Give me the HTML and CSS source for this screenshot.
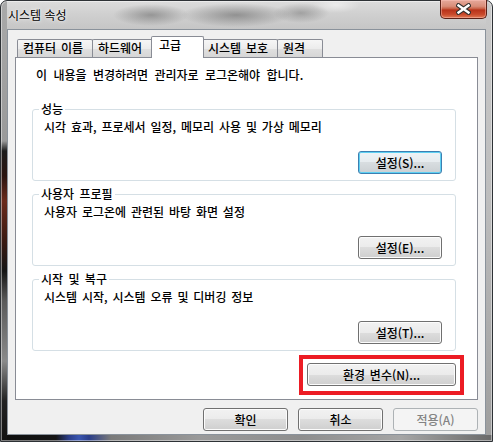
FILE: index.html
```html
<!DOCTYPE html>
<html lang="ko">
<head>
<meta charset="utf-8">
<title>시스템 속성</title>
<link rel="stylesheet" href="styles.css">
</head>
<body>
<div class="window">
  <div class="titlebar">
    <span class="title">시스템 속성</span>
    <button class="close" aria-label="닫기">
      <svg width="15" height="12" viewBox="0 0 15 12">
        <path d="M2.5 2.5 L12.5 9.5 M12.5 2.5 L2.5 9.5" stroke="#34302e" stroke-width="4.6" stroke-linecap="square" fill="none"/>
        <path d="M2.5 2.5 L12.5 9.5 M12.5 2.5 L2.5 9.5" stroke="#ffffff" stroke-width="2.4" stroke-linecap="square" fill="none"/>
      </svg>
    </button>
  </div>
  <div class="client">
    <div class="tabs">
      <div class="tab tab-name">컴퓨터 이름</div>
      <div class="tab tab-hw">하드웨어</div>
      <div class="tab tab-adv active">고급</div>
      <div class="tab tab-prot">시스템 보호</div>
      <div class="tab tab-remote">원격</div>
    </div>
    <div class="panel">
      <p class="intro">이 내용을 변경하려면 관리자로 로그온해야 합니다.</p>
      <fieldset class="group">
        <legend>성능</legend>
        <p class="desc">시각 효과, 프로세서 일정, 메모리 사용 및 가상 메모리</p>
        <div class="group-actions"><button class="btn btn-set default">설정(S)...</button></div>
      </fieldset>
      <fieldset class="group">
        <legend>사용자 프로필</legend>
        <p class="desc">사용자 로그온에 관련된 바탕 화면 설정</p>
        <div class="group-actions"><button class="btn btn-set">설정(E)...</button></div>
      </fieldset>
      <fieldset class="group">
        <legend>시작 및 복구</legend>
        <p class="desc">시스템 시작, 시스템 오류 및 디버깅 정보</p>
        <div class="group-actions"><button class="btn btn-set">설정(T)...</button></div>
      </fieldset>
      <div class="env-row">
        <div class="highlight"><button class="btn btn-env">환경 변수(N)...</button></div>
      </div>
    </div>
    <div class="footer">
      <button class="btn btn-dlg">확인</button>
      <button class="btn btn-dlg">취소</button>
      <button class="btn btn-dlg" disabled>적용(A)</button>
    </div>
  </div>
</div>
</body>
</html>
```

FILE: styles.css
```css
* {
  box-sizing: border-box;
}

html, body {
  margin: 0;
  padding: 0;
  width: 493px;
  height: 442px;
  overflow: hidden;
  background: #ffffff;
}

body {
  font-family: "Noto Sans CJK KR", "Noto Sans", sans-serif;
  font-size: 12px;
  font-weight: 500;
  color: #000;
}

.window {
  width: 493px;
  height: 442px;
  display: flex;
  flex-direction: column;
  border: 1px solid #2e3236;
  border-radius: 7px 7px 0 0;
  padding: 0 6px 6px;
  background:
    radial-gradient(ellipse 38px 11px at 150px 14px, rgba(80, 80, 80, 0.45), rgba(80, 80, 80, 0)),
    radial-gradient(ellipse 55px 12px at 235px 14px, rgba(70, 70, 70, 0.45), rgba(70, 70, 70, 0)),
    radial-gradient(ellipse 28px 10px at 300px 12px, rgba(90, 90, 90, 0.4), rgba(90, 90, 90, 0)),
    radial-gradient(ellipse 24px 8px at 335px 4px, rgba(255, 255, 255, 0.5), rgba(255, 255, 255, 0)),
    linear-gradient(to bottom, #a9a9a9 0, #9a9a9a 140px, #1c1c1c 150px, #2a1410 175px, #6a2a1c 200px, #3a1a12 240px, #151515 270px, #5a5a5a 300px, #8a8a8a 360px, #222 400px, #111 440px) 0 0 / 6px 100% no-repeat,
    linear-gradient(to right, #0e0e0e 0, #151515 55px, #2b3e8a 68px, #3a56b0 78px, #2b3e8a 88px, #7a7a7a 110px, #9a9a9a 200px, #8e8e8e 300px, #a5a5a5 400px, #6a6a6a 491px) 0 100% / 100% 6px no-repeat,
    linear-gradient(to bottom, #c9c9c9 0, #bdbdbd 200px, #9d9d9d 440px) 100% 0 / 6px 100% no-repeat,
    linear-gradient(to bottom, #dcdcdc 0, #cfcfcf 14px, #c6c6c6 28px);
  box-shadow: inset 0 0 0 1px rgba(255, 255, 255, 0.45);
}

.titlebar {
  height: 28px;
  flex: none;
  display: flex;
  align-items: flex-start;
  justify-content: space-between;
}

.title {
  padding: 7px 0 0 1px;
  line-height: 14px;
  font-size: 12px;
  font-weight: 400;
  color: #000;
  text-shadow: 0 0 5px rgba(255, 255, 255, 0.9), 0 0 2px rgba(255, 255, 255, 0.9);
}

.close {
  width: 47px;
  height: 19px;
  margin: -1px -1px 0 0;
  padding: 0;
  display: flex;
  align-items: center;
  justify-content: center;
  border: 1px solid #5a2118;
  border-top: none;
  border-radius: 0 0 5px 5px;
  background: linear-gradient(to bottom, #e6a99b 0, #d98d79 35%, #c65a3f 50%, #b8321a 55%, #c94a2c 80%, #e07a55 100%);
  box-shadow: inset 0 0 0 1px rgba(255, 200, 190, 0.45);
}

.close svg {
  display: block;
  margin-top: -1px;
}

.client {
  flex: 1;
  display: flex;
  flex-direction: column;
  background: #f0f0f0;
  border: 1px solid #8a929b;
}

.tabs {
  display: flex;
  align-items: flex-end;
  height: 27px;
  padding: 6px 0 0 9px;
  position: relative;
  z-index: 1;
}

.tab {
  height: 18px;
  border: 1px solid #898c95;
  border-bottom: none;
  border-radius: 2px 2px 0 0;
  padding-left: 5px;
  line-height: 16px;
  white-space: nowrap;
  word-spacing: 1.5px;
  background: linear-gradient(to bottom, #f6f6f6 0, #ececec 50%, #e0e0e0 51%, #d6d6d6 100%);
}

.tab + .tab {
  margin-left: -1px;
}

.tab.active {
  height: 22px;
  margin: 0 -2px -1px -2px;
  padding-left: 7px;
  line-height: 15px;
  background: #ffffff;
  position: relative;
  z-index: 2;
}

.tab.active + .tab {
  margin-left: 0;
}

.tab-name { width: 76px; }
.tab-hw { width: 61px; }
.tab-adv { width: 53px; }
.tab-prot { width: 76px; }
.tab-remote { width: 46px; }

.panel {
  height: 343px;
  margin: 0 7px;
  border: 1px solid #898c95;
  background: #ffffff;
  display: flex;
  flex-direction: column;
}

.intro {
  margin: 9px 0 0 20px;
  line-height: 16px;
  word-spacing: 3px;
}

.group {
  margin: 6px 21px 0 16px;
  padding: 0 13px 6px 6px;
  border: 1px solid #d5dfe5;
  border-radius: 3px;
  min-width: 0;
}

.intro + .group {
  margin-top: 19px;
}

.group legend {
  padding: 0 2px;
  line-height: 14px;
  word-spacing: 2px;
}

.desc {
  margin: 3px 0 0 5px;
  line-height: 16px;
  word-spacing: 1.5px;
}

.group-actions {
  display: flex;
  justify-content: flex-end;
  margin-top: 16px;
}

.btn {
  height: 23px;
  padding: 0;
  border: 1px solid #707070;
  border-radius: 3px;
  font-family: "Noto Sans CJK KR", "Noto Sans", sans-serif;
  font-size: 12px;
  font-weight: 500;
  line-height: 20px;
  color: #000;
  word-spacing: 1.5px;
  background: linear-gradient(to bottom, #f2f2f2 0, #ebebeb 50%, #dddddd 50%, #cfcfcf 100%);
  box-shadow: inset 0 0 0 1px #fcfcfc;
}

.btn.default {
  border-color: #3c7fb1;
  box-shadow: inset 0 0 0 1px #5ed0f2;
  background: linear-gradient(to bottom, #eef3f6 0, #e6ebee 50%, #d8dde0 50%, #cbd0d3 100%);
}

.btn:disabled {
  border-color: #adb2b5;
  background: #f4f4f4;
  color: #838383;
  box-shadow: none;
}

.btn-set {
  width: 84px;
}

.env-row {
  display: flex;
  justify-content: flex-end;
  margin: 4px 13px 0 0;
}

.highlight {
  border: 4px solid #ec1c24;
  padding: 4px 4px 5px 4px;
}

.btn-env {
  width: 149px;
  display: block;
}

.footer {
  display: flex;
  justify-content: flex-end;
  gap: 10px;
  margin: 8px 7px 0 0;
}

.btn-dlg {
  width: 85px;
}
```
